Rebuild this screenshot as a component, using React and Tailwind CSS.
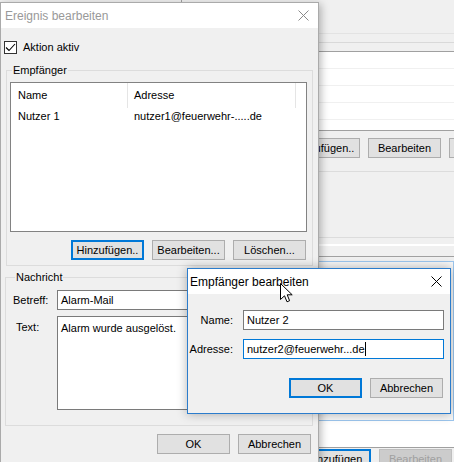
// Zwei Windows-Dialoge: "Ereignis bearbeiten" mit darüberliegendem "Empfänger bearbeiten"
const font = { fontFamily: '"Liberation Sans", Arial, sans-serif' }

const CloseIcon = ({ color = "#000" }) => (
  <svg width="11" height="11" viewBox="0 0 11 11">
    <path d="M0.5 0.5 L10.5 10.5 M10.5 0.5 L0.5 10.5" stroke={color} strokeWidth="1" fill="none" />
  </svg>
)

const WinButton = ({ children, focused = false, disabled = false, className = "" }) => (
  <div
    className={`w-[73px] h-[20px] shrink-0 flex items-center justify-center text-[11px] leading-none ${
      focused
        ? "border-2 border-[#0078d7] bg-[#e1e1e1] text-black"
        : disabled
        ? "border border-[#bfbfbf] bg-[#cccccc] text-[#a0a0a0]"
        : "border border-[#adadad] bg-[#e1e1e1] text-black"
    } ${className}`}
  >
    {children}
  </div>
)

const Cursor = () => (
  <svg width="13" height="20" viewBox="0 0 13 20">
    <path
      d="M0.5 0.5 L0.5 16.5 L4.5 12.8 L7 18.8 L9.6 17.7 L7.2 11.8 L12.2 11.8 Z"
      fill="#fff"
      stroke="#000"
      strokeWidth="1"
      strokeLinejoin="round"
    />
  </svg>
)

// Hintergrundfenster (nur rechts sichtbar)
const BackgroundWindow = () => (
  <div className="absolute inset-0 bg-[#f0f0f0] flex flex-col">
    <div className="h-[2px] shrink-0 flex">
      <div className="w-[181px]" />
      <div className="w-px bg-[#a0a0a0]" />
    </div>
    <div className="h-[31px] shrink-0" />
    <div className="h-px shrink-0 bg-[#e3e3e3]" />
    <div className="h-[8px] shrink-0" />
    <div className="h-px shrink-0 bg-[#d9d9d9]" />
    <div className="h-[8px] shrink-0" />
    <div className="h-[80px] shrink-0 border-y border-[#a0a0a0] bg-white flex flex-col">
      <div className="h-[17px] border-b border-[#f0f0f0]" />
      <div className="h-[17px] border-b border-[#f0f0f0]" />
      <div className="h-[17px] border-b border-[#f0f0f0]" />
      <div className="h-[17px] border-b border-[#f0f0f0]" />
    </div>
    <div className="mt-[7px] shrink-0 flex gap-[8px] pl-[287px]">
      <WinButton>Hinzufügen..</WinButton>
      <WinButton>Bearbeiten</WinButton>
      <WinButton />
    </div>
    <div className="mt-[13px] h-px shrink-0 bg-[#dcdcdc]" />
    <div className="mt-[65px] h-px shrink-0 bg-[#dcdcdc]" />
    <div className="mt-[6px] h-[2px] shrink-0 bg-white" />
    <div className="mt-[10px] h-px shrink-0 bg-[#a0a0a0]" />
    <div className="mt-[4px] h-[160px] shrink-0 border border-[#9cc6ee] bg-[#f7f7f7]" />
    <div className="h-[26px] shrink-0 bg-white" />
    <div className="h-px shrink-0 bg-[#a0a0a0]" />
    <div className="mt-px shrink-0 flex gap-[8px] pl-[298px]">
      <WinButton focused>Hinzufügen</WinButton>
      <WinButton disabled>Bearbeiten</WinButton>
    </div>
  </div>
)

const MainWindow = () => (
  <div className="absolute left-0 top-[2px] w-[319px] h-[480px] border border-[#aaaaaa] bg-[#f0f0f0] shadow-[2px_2px_8px_rgba(0,0,0,0.28)] flex flex-col">
    {/* Titelleiste (inaktiv) */}
    <div className="h-[25px] shrink-0 bg-white flex items-center justify-between pl-[4px] pr-[9px]">
      <span className="text-[12px] text-[#999999]">Ereignis bearbeiten</span>
      <CloseIcon color="#8a8a8a" />
    </div>

    <div className="flex flex-col pt-[13px]">
      {/* Checkbox */}
      <div className="flex items-center gap-[6px] pl-[3px] h-[13px]">
        <div className="w-[13px] h-[13px] border border-[#333333] bg-white flex items-center justify-center">
          <svg width="11" height="11" viewBox="0 0 11 11">
            <path d="M1 5.5 L4 8.5 L10 2" stroke="#000" strokeWidth="1.1" fill="none" />
          </svg>
        </div>
        <span className="text-[11px] leading-none">Aktion aktiv</span>
      </div>

      {/* Empfänger */}
      <fieldset className="mt-[9px] ml-[5px] mr-[5px] border border-[#dcdcdc] pl-[3px] pr-[5px] pt-[5px] pb-[5px]">
        <legend className="ml-[2px] px-[1px] text-[11px] leading-[14px]">Empfänger</legend>
        <div className="h-[150px] border border-[#828282] bg-white flex flex-col text-[11px]">
          <div className="h-[25px] flex">
            <div className="w-[117px] pl-[7px] border-r border-[#e5e5e5] flex items-center">Name</div>
            <div className="w-[168px] pl-[6px] border-r border-[#e5e5e5] flex items-center">Adresse</div>
          </div>
          <div className="h-[17px] flex items-center">
            <div className="w-[117px] pl-[7px]">Nutzer 1</div>
            <div className="pl-[6px]">nutzer1@feuerwehr-.....de</div>
          </div>
        </div>
        <div className="mt-[8px] mr-px flex justify-end gap-[8px]">
          <WinButton focused>Hinzufügen..</WinButton>
          <WinButton>Bearbeiten...</WinButton>
          <WinButton>Löschen...</WinButton>
        </div>
      </fieldset>

      {/* Nachricht */}
      <fieldset className="mt-[4px] ml-[4px] mr-[5px] border border-[#dcdcdc] pl-[7px] pr-[5px] pt-[6px] pb-[15px] text-[11px]">
        <legend className="ml-[2px] px-[1px] leading-[14px]">Nachricht</legend>
        <div className="flex items-center">
          <span className="w-[44px] shrink-0">Betreff:</span>
          <div className="w-[250px] h-[20px] border border-[#7a7a7a] bg-white flex items-center pl-[3px]">Alarm-Mail</div>
        </div>
        <div className="mt-[6px] flex items-start">
          <span className="w-[44px] shrink-0 pl-[3px] pt-[3px]">Text:</span>
          <div className="w-[250px] h-[94px] border border-[#7a7a7a] bg-white pl-[3px] pt-[3px]">Alarm wurde ausgelöst.</div>
        </div>
      </fieldset>

      <div className="mt-[8px] flex justify-end gap-[8px] pr-[7px]">
        <WinButton>OK</WinButton>
        <WinButton>Abbrechen</WinButton>
      </div>
    </div>
  </div>
)

const RecipientDialog = () => (
  <div className="absolute left-[187px] top-[268px] w-[264px] h-[146px] border border-[#2b7ccc] bg-[#f0f0f0] shadow-[0_0_10px_rgba(0,0,0,0.3)] flex flex-col text-[11px]">
    <div className="h-[25px] shrink-0 bg-white flex items-center justify-between pl-[2px] pr-[8px]">
      <span className="text-[12px] text-black">Empfänger bearbeiten</span>
      <CloseIcon />
    </div>
    <div className="flex flex-col pt-[16px]">
      <div className="flex items-center gap-[10px]">
        <span className="w-[45px] text-right">Name:</span>
        <div className="w-[201px] h-[20px] border border-[#7a7a7a] bg-white flex items-center pl-[3px]">Nutzer 2</div>
      </div>
      <div className="mt-[9px] flex items-center gap-[10px]">
        <span className="w-[45px] text-right">Adresse:</span>
        <div className="w-[201px] h-[20px] border border-[#0078d7] bg-white flex items-center pl-[3px]">
          <span>nutzer2@feuerwehr...de</span>
          <span className="w-px h-[14px] bg-black" />
        </div>
      </div>
      <div className="mt-[19px] flex justify-end gap-[8px] pr-[7px]">
        <WinButton focused>OK</WinButton>
        <WinButton>Abbrechen</WinButton>
      </div>
    </div>
  </div>
)

export default function App() {
  return (
    <div className="relative w-[454px] h-[462px] overflow-hidden bg-[#f0f0f0] text-black" style={font}>
      <BackgroundWindow />
      <MainWindow />
      <RecipientDialog />
      <div className="absolute left-[280px] top-[283px]">
        <Cursor />
      </div>
    </div>
  )
}
